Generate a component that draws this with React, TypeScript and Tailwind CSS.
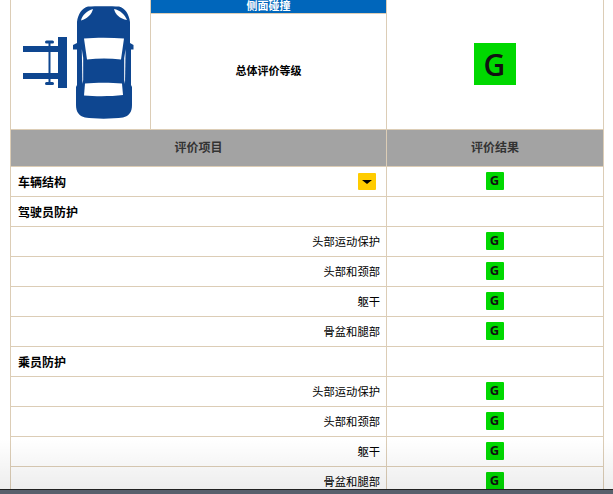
const font = { fontFamily: '"Liberation Sans", "Noto Sans CJK SC", sans-serif' }

type Row = {
  label: string
  kind: "section" | "item"
  grade?: boolean
  dropdown?: boolean
}

const rows: Row[] = [
  { label: "车辆结构", kind: "section", grade: true, dropdown: true },
  { label: "驾驶员防护", kind: "section" },
  { label: "头部运动保护", kind: "item", grade: true },
  { label: "头部和颈部", kind: "item", grade: true },
  { label: "躯干", kind: "item", grade: true },
  { label: "骨盆和腿部", kind: "item", grade: true },
  { label: "乘员防护", kind: "section" },
  { label: "头部运动保护", kind: "item", grade: true },
  { label: "头部和颈部", kind: "item", grade: true },
  { label: "躯干", kind: "item", grade: true },
  { label: "骨盆和腿部", kind: "item", grade: true },
]

function CarIcon() {
  return (
    <svg width="140" height="129" viewBox="11 0 140 129">
      <g fill="#0e4690">
        <rect x="23" y="46" width="36" height="6" />
        <rect x="23" y="73" width="36" height="6" />
        <rect x="58" y="37" width="9" height="51" />
        <rect x="48.5" y="42" width="2" height="42" />
        <rect x="45" y="40.500" width="9" height="3" rx="1.500" />
        <rect x="45" y="82" width="9" height="3" rx="1.500" />
        <path d="M88 6.500C95 6 112 6 119 6.500C125 8 129 14 130 22V43L133.500 45V49.500H131V85L132 87V105C132 112 129 116 123 117.500C112 119 95 119 85 117.500C79 116 76 112 76 105V87L77 85V49.500H73V45L77 43V22C78 14 82 8 88 6.500Z" />
      </g>
      <g fill="#fff">
        <path d="M84 38.500C96 37.500 111 37.500 124 38.500L121 59.500C110 58 98 58 87 59.500Z" />
        <path d="M85 83.500C96 82.500 111 82.500 122 83.500L123 95C111 96.500 96 96.500 84 95.500Z" />
        <path d="M81 20.500C82 15 87 11 93 9C92 14 87 19 81 20.500Z" />
        <path d="M114 9C120 10 125 15 127 20C120 19 115 14 114 9Z" />
        <path d="M81.800 49L83.200 58V80L82.400 84Z" />
        <path d="M125.600 49L124.200 58V80L125 84Z" />
      </g>
    </svg>
  )
}

function GradeBadge() {
  return (
    <div className="flex h-[18px] w-[18px] items-center justify-center rounded-[1px] bg-[#00d800] text-[13px] font-bold text-[#111]" style={{ fontFamily: '"Open Sans", sans-serif' }}>
      G
    </div>
  )
}

export default function App() {
  return (
    <div className="relative h-[494px] w-[613px] overflow-hidden bg-white text-[11.3px] text-black" style={font}>
      <div className="ml-[10px] w-[594px] border-x border-[#dccdb6]">
        <div className="flex h-[129px]">
          <div className="w-[139px] shrink-0">
            <CarIcon />
          </div>
          <div className="flex w-[236px] shrink-0 flex-col border-l border-[#dccdb6]">
            <div className="flex h-[13px] shrink-0 items-center justify-center overflow-hidden bg-[#0066bb] text-[11px] font-bold text-white">
              侧面碰撞
            </div>
            <div className="flex flex-1 items-center justify-center border-t border-[#dccdb6] pb-[1px] text-[11px] font-bold">
              总体评价等级
            </div>
          </div>
          <div className="flex flex-1 items-center justify-center border-l border-[#dccdb6] pb-[1px] pr-[1px]">
            <div className="flex h-[42px] w-[42px] items-center justify-center bg-[#00d800] text-[30px] font-semibold text-[#111]" style={{ fontFamily: '"Open Sans", sans-serif' }}>
              G
            </div>
          </div>
        </div>

        <div className="grid h-[38px] grid-cols-[375px_1fr] border-y border-[#dccdb6] bg-[#a3a3a3] text-[12px] font-bold text-[#333]">
          <div className="flex items-center justify-center">评价项目</div>
          <div className="flex items-center justify-center border-l border-[#dccdb6]">评价结果</div>
        </div>

        {rows.map((row, i) => (
          <div key={i} className="grid h-[30px] grid-cols-[375px_1fr] border-b border-[#dccdb6]">
            <div className={row.kind === "section" ? "flex items-center justify-between pl-[7px] pr-[10px] pt-[2px] text-[12px] font-bold" : "flex items-center justify-end pr-[6px] pt-[2px]"}>
              <span>{row.label}</span>
              {row.dropdown && (
                <div className="-mt-[2px] flex h-[17px] w-[18px] items-center justify-center rounded-[1px] bg-[#ffcc00]">
                  <div className="h-0 w-0 border-x-[5px] border-t-[4px] border-x-transparent border-t-black" />
                </div>
              )}
            </div>
            <div className="flex items-center justify-center border-l border-[#dccdb6] pb-[1px] pr-[1px]">
              {row.grade && <GradeBadge />}
            </div>
          </div>
        ))}
      </div>

      {/* window fade and taskbar edge at the bottom */}
      <div className="absolute inset-x-0 bottom-[5px] h-[50px] bg-gradient-to-b from-transparent to-black/[0.07]" />
      <div className="absolute inset-x-0 bottom-0 h-[5px] border-t border-[#222] bg-[#58606c]" />
    </div>
  )
}
